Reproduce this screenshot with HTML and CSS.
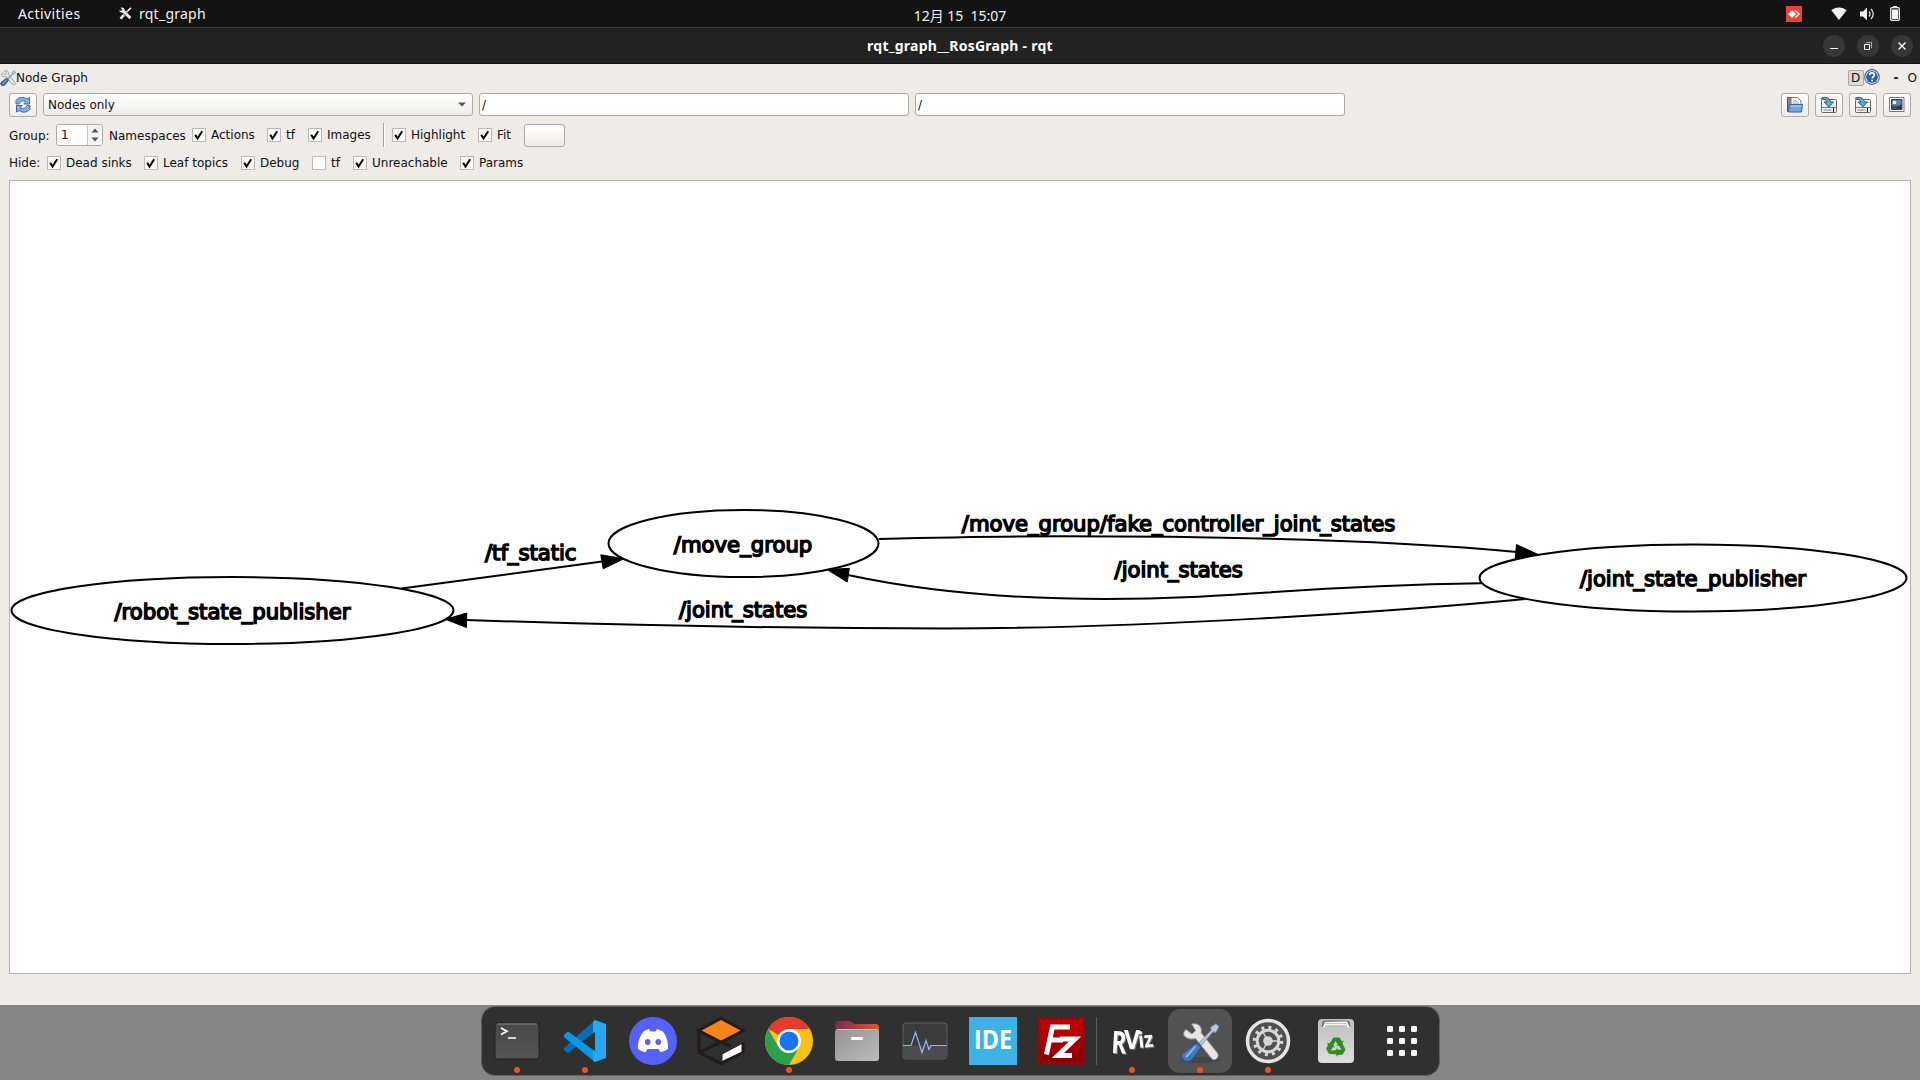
FILE: index.html
```html
<!DOCTYPE html>
<html lang="en">
<head>
<meta charset="utf-8">
<title>rqt_graph__RosGraph - rqt</title>
<link rel="stylesheet" href="styles.css">
</head>
<body>
<svg class="defs" width="0" height="0" aria-hidden="true">
  <defs>
    <symbol id="tools" viewBox="0 0 40 40">
      <path d="M6 7.500 12 12l3.500-3.500L11.500 2c4-1 8 0 9.500 4 .6 2 .5 3.500.2 4.700L37.500 31c1.500 2.500 0 5-1 6-1.500 1.200-4 1-5-.500L15.500 16.500C11 18 6 16.500 4 13.500 3 11 4 9 6 7.500z" class="tool-wrench"/>
      <path d="M19 21 31.500 8l-1-2.500L36 1.800l3 3-3.500 5.700-2.500-.8L21.500 23z" class="tool-shaft"/>
      <path d="M15 21.500c2-1.500 6.500 2.500 6 4.500L12.500 37c-2 3-5.500 3-8 1.500-3-2-4-4.500-2-7z" class="tool-handle"/>
      <path d="M15.500 24.500 6 35" class="tool-shine"/>
    </symbol>
    <symbol id="check" viewBox="0 0 14 14">
      <path d="M3.200 6.700 5.500 10.500 10.200 3.200" fill="none" stroke="#000" stroke-width="2"/>
    </symbol>
    <symbol id="save" viewBox="0 0 18 18">
      <rect x="1.500" y="3.500" width="15" height="13" rx="1" fill="#f4f4f2" stroke="#666" />
      <path d="M2 11.500h14" stroke="#777"/><path d="M3.500 14h8" stroke="#bbb" stroke-width="2"/><path d="M13.500 12v4" stroke="#111"/>
      <path d="M1.500 2c3.500-1.500 8-.5 9 4h3L8.800 11 4 6h2.700C6.500 3.800 4.500 3 1.500 3z" fill="#6ea4cb" stroke="#285f88"/>
    </symbol>
  </defs>
</svg>

<header class="topbar">
  <div class="topbar-left">
    <span class="activities">Activities</span>
    <svg class="app-glyph" width="13" height="13" viewBox="0 0 13 13"><path d="M1.500.8c2-.8 4.300.2 4.300 2.700L12.300 10 10.500 12.300 3.800 5.700C2 6 .5 5 .3 3l1.900.9L3.200 2.500z" fill="#eee"/><path d="M12 .8 7.500 5" stroke="#eee" stroke-width="1.600"/><path d="M5 7.800 1.500 11.700" stroke="#eee" stroke-width="2.600"/></svg>
    <span class="app-name">rqt_graph</span>
  </div>
  <span class="clock">12月 15&nbsp; 15:07</span>
  <div class="tray">
    <svg width="16" height="16" viewBox="0 0 16 16"><path fill="#ef4036" d="M0 0h16v16H0z"/><path fill="#fff" d="m6 4 4 4-4 4-4-4zM8.500 4.500 10 4l4 4-4 4-1.500-.500L12 8z"/></svg>
    <svg class="wifi" width="16" height="13" viewBox="0 0 16 13"><path fill="#f2f2f2" d="M8 13 .3 3.300C4-.6 12-.6 15.700 3.300z"/></svg>
    <svg class="volume" width="15" height="14" viewBox="0 0 15 14"><path fill="#f2f2f2" d="M0 4.500h3L7 .5v13l-4-4H0z"/><path d="M9 4.500q2 2.500 0 5M11 2q4.500 5 0 10" fill="none" stroke="#ddd" stroke-width="1.300"/></svg>
    <svg class="battery" width="10" height="15" viewBox="0 0 10 15"><path fill="#f2f2f2" d="M3 0h4v2H3zM2 3.500h6v9.500H2z"/><rect x=".7" y="1.700" width="8.600" height="12.600" rx="1.200" fill="none" stroke="#f2f2f2" stroke-width="1.300"/></svg>
  </div>
</header>

<div class="titlebar">
  <span class="title">rqt_graph__RosGraph - rqt</span>
  <div class="window-buttons">
    <span class="wbtn"><svg width="22" height="22" viewBox="0 0 22 22"><path d="M7 13.500h8" stroke="#fff"/></svg></span>
    <span class="wbtn"><svg width="22" height="22" viewBox="0 0 22 22"><path d="M7.500 9.500h5v5h-5z" fill="none" stroke="#fff"/><path d="M9 7.500h5.500V13" fill="none" stroke="#aaa"/></svg></span>
    <span class="wbtn"><svg width="22" height="22" viewBox="0 0 22 22"><path d="m7.500 7.500 7 7m0-7-7 7" stroke="#fff" stroke-width="1.400"/></svg></span>
  </div>
</div>

<main class="window">
  <div class="dock-title">
    <svg class="tools-small" width="16" height="16"><use href="#tools"/></svg>
    <span>Node Graph</span>
    <div class="dock-title-buttons">
      <span class="d-btn">D</span>
      <svg width="16" height="16" viewBox="0 0 16 16"><circle cx="8" cy="8" r="7.300" fill="#fff" stroke="#3c66a5" stroke-width="1.200"/><circle cx="8" cy="8" r="5.900" fill="#315d9e"/><path d="M5.700 6.200c0-3 4.700-3 4.700-.2C10.400 7.700 8.200 7.700 8.200 9.600M8.200 10.800v1.700" fill="none" stroke="#fff" stroke-width="1.700"/></svg>
      <span class="dash">-</span><span class="o-btn">O</span>
    </div>
  </div>

  <div class="row row-topics">
    <button class="tool-btn"><svg width="18" height="18" viewBox="0 0 18 18"><path d="M2 8V4.500C5 .5 10 .8 13 3l2.500-1.500V8H9.800l2-2.300C9.500 4 6.500 5 5 8zM16 9.500V13c-3 4-8 3.800-11 1.500L2.500 16V9.500h5.700l-2 2.500c2.300 1.700 5.300.5 6.800-2.500z" fill="#84afe0" stroke="#3a69ac"/></svg></button>
    <div class="combo"><span>Nodes only</span><svg width="8" height="5" viewBox="0 0 8 5"><path d="M0 .5h8L4 4.500z" fill="#555"/></svg></div>
    <div class="field">/</div>
    <div class="field">/</div>
    <div class="file-buttons">
      <button class="tool-btn"><svg width="18" height="18" viewBox="0 0 18 18"><path d="M1.500 1.500h6v14h-6z" fill="#888" stroke="#555"/><path d="M5 1.500h6.500L15 5v8H5z" fill="#f7f7f7" stroke="#777"/><path d="M7 5h4M7 7h6" stroke="#aaa"/><path d="M3.500 8.500h13L15.500 16h-13z" fill="#77a8dc" stroke="#2d63a3"/><path d="M4.500 10h11" stroke="#b7d5f3"/></svg></button>
      <button class="tool-btn"><svg width="18" height="18"><use href="#save"/></svg></button>
      <button class="tool-btn"><svg width="18" height="18"><use href="#save"/></svg></button>
      <button class="tool-btn"><svg width="18" height="18" viewBox="0 0 18 18"><path d="M1.500 1.500h14.500v14H1.500z" fill="#fff" stroke="#777"/><path d="M3.500 3.500h10.500v10H3.500z" fill="#6482ad" stroke="#333b4d"/><path d="M4 9.500h9.500v3.500H4z" fill="#3f516d"/><circle cx="6.500" cy="6.500" r="1.800" fill="#f7f4bb"/><path d="m8 12.500 2-2 1 .5 2-3 .5 1v3.500z" fill="#252c39"/></svg></button>
    </div>
  </div>

  <div class="row row-group">
    <span class="lead">Group:</span>
    <div class="spin"><span class="spin-value">1</span><span class="spin-arrows"><svg width="8" height="14" viewBox="0 0 8 14"><path d="M.5 4.500 4 .5l3.500 4zM.5 9.500h7l-3.500 4z" fill="#555"/></svg></span></div>
    <span class="namespaces">Namespaces</span>
    <label class="chk w75"><svg class="box"><use href="#check"/></svg>Actions</label>
    <label class="chk w41"><svg class="box"><use href="#check"/></svg>tf</label>
    <label class="chk w75"><svg class="box"><use href="#check"/></svg>Images</label>
    <span class="vline"></span>
    <label class="chk w86"><svg class="box"><use href="#check"/></svg>Highlight</label>
    <label class="chk w46"><svg class="box"><use href="#check"/></svg>Fit</label>
    <button class="blank-btn"></button>
  </div>

  <div class="row row-hide">
    <span class="lead">Hide:</span>
    <label class="chk w97"><svg class="box"><use href="#check"/></svg>Dead sinks</label>
    <label class="chk w97"><svg class="box"><use href="#check"/></svg>Leaf topics</label>
    <label class="chk w71"><svg class="box"><use href="#check"/></svg>Debug</label>
    <label class="chk w41"><svg class="box"></svg>tf</label>
    <label class="chk w107"><svg class="box"><use href="#check"/></svg>Unreachable</label>
    <label class="chk"><svg class="box"><use href="#check"/></svg>Params</label>
  </div>

  <div class="canvas">
    <svg class="graph" viewBox="10 181 1900 792">
      <g class="edges">
        <ellipse cx="232.500" cy="610.500" rx="221" ry="33.500"/>
        <ellipse cx="743.500" cy="543.500" rx="135" ry="33.500"/>
        <ellipse cx="1693" cy="578" rx="213.500" ry="33.500"/>
        <path d="M401.500 588.500Q500 575 602 561.500"/>
        <path d="M878.800 539C940 537.500 1000 536.300 1061 536.300C1230 536.300 1390 540 1517 552"/>
        <path d="M1481 583.300C1290 586 1240 599 1106 599C1010 599 920 590.500 848 575"/>
        <path d="M1525.300 599C1390 612 1140 628.500 945 628.500C780 628.500 620 625 466 620"/>
      </g>
      <path class="heads" d="M624 558.700 600.800 554.800 603.200 568.800zM1538.500 554.700 1516.500 544.500 1515.200 559zM827 569.500 849.300 568.300 847.300 582zM445.500 619.300 466.800 613 466.400 627.500z"/>
      <g class="names">
        <text x="114.500" y="618.500" textLength="236">/robot_state_publisher</text>
        <text x="673.800" y="551.500" textLength="138.500">/move_group</text>
        <text x="1580" y="585.900" textLength="226">/joint_state_publisher</text>
        <text x="485" y="559.900" textLength="91.500">/tf_static</text>
        <text x="961.800" y="531.200" textLength="433.500">/move_group/fake_controller_joint_states</text>
        <text x="1114.600" y="577.200" textLength="128.300">/joint_states</text>
        <text x="679" y="617.400" textLength="128.300">/joint_states</text>
      </g>
    </svg>
  </div>
</main>

<footer class="desktop">
  <nav class="dock">
    <div class="app running"><svg viewBox="0 0 48 48"><defs><linearGradient id="gt" x2="0" y2="1"><stop stop-color="#484848"/><stop offset="1" stop-color="#555"/></linearGradient></defs><rect x="2" y="6" width="44" height="36" rx="3" fill="url(#gt)" stroke="#222"/><path d="M4 7h40" stroke="#888"/><path d="m8 11 6 3.300-6 3.300M15 21h8" fill="none" stroke="#fff" stroke-width="1.700"/></svg></div>
    <div class="app running"><svg viewBox="0 0 48 48"><path d="M3 31 34 3v12L7 36l-4-3z" fill="#0070b2"/><path d="M3 18 7 14.500 34 34v11L3 20z" fill="#0998e5"/><path d="M34 3 45 7v34L34 45 32 44V5z" fill="#24a8ef"/><path d="m34 15-13 9.500L34 34z" fill="#303030"/></svg></div>
    <div class="app"><svg viewBox="0 0 48 48"><circle cx="24" cy="24" r="24" fill="#5662f6"/><path d="m15 14 5-2 1.300 2.400h5.400L28 12l6 2.500c4 5.500 5.500 12 5 17.500q-3.500 2.700-7.500 3.200L29.500 32h-11l-2 3.200Q12 34.500 9 32C8.500 26 10.500 19 15 14z" fill="#fff"/><ellipse cx="18.700" cy="25" rx="2.800" ry="3" fill="#5662f6"/><ellipse cx="29.200" cy="25" rx="2.800" ry="3" fill="#5662f6"/></svg></div>
    <div class="app"><svg viewBox="0 0 48 48"><path d="M24 1.500 46 13.500 24 25 2 13.500zM2 13.500v22L24 46.500 46 35V25M24 25 2 35.500M24 25l10 4.500" fill="none" stroke="#211d1e" stroke-width="3.500"/><path d="M24 3 43.500 13.500 24 23.500 4.500 13.500z" fill="#f58518"/><path d="m25 37 20-10.500v8.500L25 44.500z" fill="#fff" stroke="#211d1e"/></svg></div>
    <div class="app running"><svg viewBox="0 0 48 48"><circle cx="24" cy="24" r="24" fill="#fbc116"/><path d="M24 24 3.200 12A24 24 0 0 1 44.800 12H24z" fill="#e33b2e"/><path d="M3.200 12 13.600 30 24 36 34.400 30 24 48A24 24 0 0 1 3.200 12z" fill="#2da04c"/><circle cx="24" cy="24" r="12" fill="#fff"/><circle cx="24" cy="24" r="9.500" fill="#1a73e8"/></svg></div>
    <div class="app"><svg viewBox="0 0 48 48"><defs><linearGradient id="gf"><stop stop-color="#772953"/><stop offset="1" stop-color="#e95420"/></linearGradient><linearGradient id="gg" x2="1" y2="1"><stop stop-color="#929292"/><stop offset="1" stop-color="#bdbdbd"/></linearGradient></defs><path d="M2 8q0-4 3-4h12l4 3h22q3 0 3 4v20H2z" fill="url(#gf)"/><rect x="2" y="12" width="44" height="32" rx="3" fill="url(#gg)"/><path d="M4 12.500h40" stroke="#c8c8c8"/><rect x="18" y="20" width="12" height="3" rx="1" fill="#fff"/></svg></div>
    <div class="app"><svg viewBox="0 0 48 48"><rect x="2" y="6" width="44" height="36" rx="3" fill="#3b3b3c" stroke="#606060"/><path d="M3 28.500h43V41H3z" fill="#4b4c52"/><path d="M2 28.500h8l4.500-13 6.500 20 4-12 3 9 2-4h16" fill="none" stroke="#96b3f3" stroke-width="1.200"/></svg></div>
    <div class="app"><svg viewBox="0 0 48 48"><path d="M0 0h48v48H0z" fill="#3cb2e5"/><text class="ide" x="5" y="32" textLength="38" lengthAdjust="spacingAndGlyphs">IDE</text></svg></div>
    <div class="app"><svg viewBox="0 0 48 48"><defs><linearGradient id="gz" x2="0" y2="1"><stop stop-color="#c00"/><stop offset="1" stop-color="#840000"/></linearGradient></defs><path d="M2 2h44v44H2z" fill="url(#gz)"/><rect x="2" y="2" width="44" height="44" fill="none" stroke="#a60000" stroke-width="4" stroke-linecap="round" stroke-dasharray="0 5.500"/><path d="M9.500 37.500 15.500 10H33M12.500 23H26M23 22h15L21 38.500h14" fill="none" stroke="#fff" stroke-width="5"/></svg></div>
    <span class="dock-sep"></span>
    <div class="app running"><svg viewBox="0 0 48 48"><g class="rviz"><text x="3" y="36" transform="rotate(3 3 36)" textLength="15" lengthAdjust="spacingAndGlyphs" font-size="31">R</text><text x="16" y="32" textLength="16" lengthAdjust="spacingAndGlyphs" font-size="27">V</text><text x="31" y="31" transform="rotate(-6 31 31)" textLength="15" lengthAdjust="spacingAndGlyphs" font-size="22">iz</text></g></svg></div>
    <div class="app running active"><svg viewBox="0 0 48 48"><ellipse cx="25" cy="43" rx="20" ry="3" fill="#454545"/><use href="#tools" x="4" y="5" width="40" height="40"/></svg></div>
    <div class="app running"><svg viewBox="0 0 48 48"><circle cx="24" cy="24" r="20.500" fill="#505050" stroke="#e4e4e4" stroke-width="3.500"/><circle cx="24" cy="24" r="13.500" fill="none" stroke="#d6d6d6" stroke-width="3.500" stroke-dasharray="3 4.070"/><circle cx="24" cy="24" r="10.800" fill="none" stroke="#d6d6d6" stroke-width="3"/><circle cx="24" cy="24" r="4.800" fill="#d6d6d6"/><path d="M24 24h10M24 24l-5-9M24 24l-5 9" stroke="#d6d6d6" stroke-width="1.500"/></svg></div>
    <div class="app"><svg viewBox="0 0 48 48"><defs><linearGradient id="gr" x2="0" y2="1"><stop stop-color="#bdbdbd"/><stop offset="1" stop-color="#dedede"/></linearGradient></defs><rect x="6" y="2" width="36" height="44" rx="4" fill="url(#gr)"/><path d="M12 3.500h24q2 0 2.500 6.500h-29q.5-6.500 2.500-6.500z" fill="#777"/><path d="m13 5 22-.5 3 6.500-4-1.500H14L10.500 11z" fill="#fff"/><path d="M13 6.500h22M13 8.300h22" stroke="#999" stroke-width=".6"/><g fill="#2a8f1e"><path id="rc" d="m17.800 26.200 3.200-5q.5-.7 1.500-.7h4q1 0 1.500.8l2 3.200 1.800-1-2.300 5.300-5.700-.3 1.900-1.100-2.200-3.500-2.200 4.500z"/><use href="#rc" transform="rotate(120 24 30)"/><use href="#rc" transform="rotate(240 24 30)"/></g></svg></div>
    <div class="app"><svg viewBox="0 0 48 48"><g fill="#f3f3f3"><rect x="7" y="9" width="6" height="6" rx="1.300"/><rect x="19" y="9" width="6" height="6" rx="1.300"/><rect x="31" y="9" width="6" height="6" rx="1.300"/><rect x="7" y="21" width="6" height="6" rx="1.300"/><rect x="19" y="21" width="6" height="6" rx="1.300"/><rect x="31" y="21" width="6" height="6" rx="1.300"/><rect x="7" y="33" width="6" height="6" rx="1.300"/><rect x="19" y="33" width="6" height="6" rx="1.300"/><rect x="31" y="33" width="6" height="6" rx="1.300"/></g></svg></div>
  </nav>
</footer>
</body>
</html>
```
FILE: styles.css
```css
* { box-sizing: border-box; }
body {
  margin: 0;
  width: 1920px;
  height: 1080px;
  overflow: hidden;
  display: flex;
  flex-direction: column;
  font: 12px/16px "DejaVu Sans", sans-serif;
  color: #111;
  background: #868686;
}
svg { display: block; flex: none; }
.defs { position: absolute; }
button { padding: 0; font: inherit; }

.topbar {
  height: 28px;
  flex: none;
  display: grid;
  grid-template-columns: 1fr auto 1fr;
  align-items: center;
  background: #131313;
  border-bottom: 1px solid #373737;
  color: #f2f2f2;
  font: 14px/22px "Noto Sans", "Noto Sans CJK JP", sans-serif;
}
.topbar-left { display: flex; align-items: center; padding-left: 18px; }
.activities { width: 101px; letter-spacing: .42px; }
.app-name { margin-left: 7px; letter-spacing: .25px; }
.clock { padding-top: 4px; letter-spacing: 0; }
.tray { display: flex; align-items: center; justify-content: flex-end; padding-right: 20px; }
.wifi { margin-left: 29px; }
.volume { margin-left: 13px; }
.battery { margin-left: 15px; }

.titlebar {
  height: 36px;
  flex: none;
  display: grid;
  grid-template-columns: 1fr auto 1fr;
  align-items: center;
  background: #222;
  border-bottom: 1px solid #151515;
  color: #fff;
  font: bold 14px/35px "Noto Sans", sans-serif;
}
.title { grid-column: 2; letter-spacing: .26px; }
.window-buttons { display: flex; justify-content: flex-end; gap: 12px; padding-right: 7px; }
.wbtn { width: 22px; height: 22px; border-radius: 50%; background: #373737; }

.window { height: 941px; flex: none; background: #efebe7; display: flex; flex-direction: column; }
.dock-title { height: 29px; display: flex; align-items: center; padding-bottom: 2px; }
.tools-small { stroke-width: 2; }
.dock-title-buttons { margin-left: auto; display: flex; align-items: center; }
.dock-title-buttons svg { margin-top: -1px; }
.d-btn { width: 16px; height: 16px; line-height: 15px; text-align: center; background: #dedbd7; border: 1px solid #aaa6a2; border-radius: 2px; }
.dash { margin-left: 14px; font-weight: bold; }
.o-btn { margin-left: 9px; margin-right: 3px; }

.row { display: flex; padding: 0 9px; }
.row-topics { gap: 6px; height: 30px; align-items: flex-start; }
.tool-btn, .blank-btn, .combo {
  background: linear-gradient(#fff, #efedeb);
  border: 1px solid #aeaaa6;
  border-radius: 3px;
}
.tool-btn { width: 28px; height: 24px; display: flex; align-items: center; justify-content: center; }
.combo { width: 430px; height: 23px; display: flex; align-items: center; justify-content: space-between; padding: 0 6px 0 4px; }
.field { width: 430px; height: 23px; background: #fff; border: 1px solid #aeaaa6; border-radius: 3px; padding-left: 2px; line-height: 23px; }
.file-buttons { margin-left: auto; display: flex; gap: 6px; }

.row-group { height: 27px; align-items: center; padding-bottom: 3px; }
.row-group .lead, .namespaces { padding-top: 2px; }
.row-group .lead { width: 47px; }
.spin { width: 47px; height: 22px; display: flex; background: #fff; border: 1px solid #aeaaa6; border-radius: 3px; overflow: hidden; }
.spin-value { flex: 1; padding-left: 4px; line-height: 21px; }
.spin-arrows { width: 15px; display: flex; align-items: center; justify-content: center; background: #f6f4f2; border-left: 1px solid #c8c4c0; }
.namespaces { margin-left: 6px; width: 83px; flex: none; }
.chk { display: flex; flex: none; align-items: center; gap: 5px; white-space: nowrap; }
.w41 { width: 41px; }
.w46 { width: 46px; }
.w71 { width: 71px; }
.w75 { width: 75px; }
.w86 { width: 86px; }
.w97 { width: 97px; }
.w107 { width: 107px; }
.box { width: 14px; height: 14px; background: #fff; box-shadow: inset 0 0 0 1px #bdb9b5; }
.vline { width: 2px; height: 24px; background: linear-gradient(90deg, #a5a19d 50%, #fff 50%); margin-right: 7px; }
.blank-btn { width: 41px; height: 23px; }
.row-hide { height: 30px; align-items: center; padding-bottom: 4px; }
.row-hide .lead { width: 38px; }

.canvas { margin: 0 9px; height: 794px; background: #fff; border: 1px solid #b5b1ad; }
.graph { width: 1900px; height: 792px; }
.edges { fill: none; stroke: #000; stroke-width: 2; }
.heads { stroke: #000; stroke-width: 1; }
.names { font-size: 21.2px; fill: #000; stroke: #000; stroke-width: 1.5; text-rendering: geometricPrecision; }

.desktop { flex: 1; display: flex; justify-content: center; align-items: flex-start; background: #868585; padding: 1px 0 0 1px; }
.dock { height: 70px; display: flex; align-items: center; gap: 4px; padding: 0 3px; background: #303030; border: 1px solid #606060; border-radius: 14px; }
.app { position: relative; width: 64px; height: 64px; display: flex; align-items: center; justify-content: center; border-radius: 12px; }
.app svg { width: 48px; height: 48px; overflow: visible; }
.active { background: #525252; }
.running::after { content: ""; position: absolute; left: 29px; bottom: 0; width: 6px; height: 6px; border-radius: 50%; background: #e95420; }
.dock-sep { width: 1px; height: 48px; background: #5c5c5c; margin: 0 -1px; }
.ide { font: bold 27px "Open Sans", sans-serif; fill: #fff; }
.rviz { font-family: "Open Sans", sans-serif; font-weight: bold; fill: #fff; filter: drop-shadow(1px 1px 0 #777); }
.tool-wrench { fill: #e6e6e6; stroke: #8e8e8e; }
.tool-shaft { fill: #b7c9db; stroke: #8295a8; }
.tool-handle { fill: #4477ba; stroke: #204a87; }
.tool-shine { stroke: #8fb4e6; stroke-width: 2; fill: none; }
```
